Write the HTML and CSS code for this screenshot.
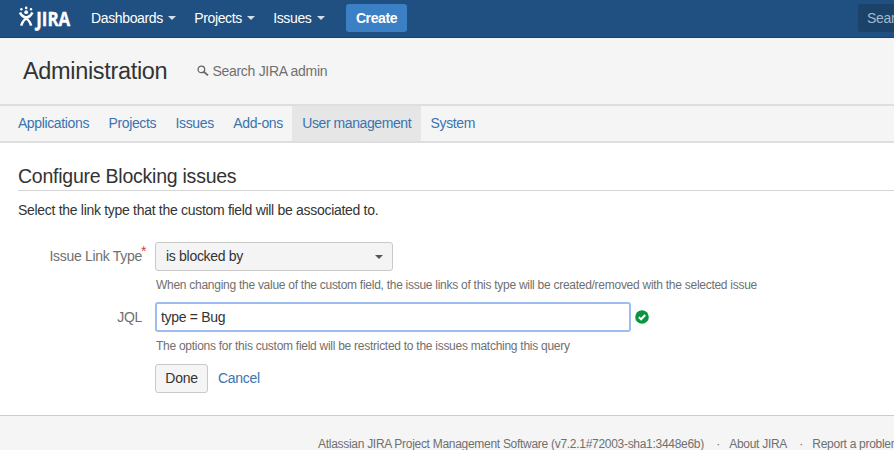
FILE: index.html
```html
<!DOCTYPE html>
<html lang="en">
<head>
<meta charset="utf-8">
<title>Configure Blocking issues - JIRA</title>
<link rel="stylesheet" href="styles.css">
</head>
<body>
<header class="topbar">
  <svg class="logo" width="54" height="24" viewBox="0 0 54 24">
    <g fill="#fff">
      <circle cx="3.4" cy="3.2" r="1.2"/><circle cx="8.2" cy="1.9" r="1.3"/><circle cx="13" cy="3.2" r="1.2"/>
      <circle cx="8.2" cy="6.2" r="1.9"/>
    </g>
    <path d="M2 6.4C3.6 10 6 11.2 8.2 11.2S12.8 10 14.4 6.4M3.6 9C8 11.5 12 14.5 13.2 19.6M12.8 9C8.4 11.5 4.4 14.5 3.2 19.6" fill="none" stroke="#fff" stroke-width="2.5"/>
    <text class="wordmark" x="18.2" y="19.6" textLength="34" lengthAdjust="spacingAndGlyphs">JIRA</text>
  </svg>
  <nav class="menu">
    <a class="drop">Dashboards</a>
    <a class="drop">Projects</a>
    <a class="drop">Issues</a>
  </nav>
  <button class="create">Create</button>
  <div class="quick">Search</div>
</header>
<div class="admin">
  <h1>Administration</h1>
  <svg class="lens" width="12" height="12" viewBox="0 0 12 12" fill="none" stroke="#666"><circle cx="4.4" cy="4.4" r="3.3" stroke-width="1.3"/><path d="M6.9 6.9L11 10.4" stroke-width="1.9"/></svg>
  <span class="find">Search JIRA admin</span>
</div>
<nav class="tabs">
  <a>Applications</a><a>Projects</a><a>Issues</a><a>Add-ons</a><a class="active">User management</a><a>System</a>
</nav>
<main>
  <h2>Configure Blocking issues</h2>
  <p class="intro">Select the link type that the custom field will be associated to.</p>
  <form>
    <div class="row">
      <label>Issue Link Type<span class="req">*</span></label>
      <div class="field">
        <div class="select">is blocked by</div>
        <p class="hint">When changing the value of the custom field, the issue links of this type will be created/removed with the selected issue</p>
      </div>
    </div>
    <div class="row jql">
      <label>JQL</label>
      <div class="field">
        <div class="line">
          <input type="text" value="type = Bug">
          <svg width="14" height="14" viewBox="0 0 14 14"><circle cx="7" cy="7" r="6.8" fill="#0b9440"/><path d="M3.8 7.1L6.1 9.3L10.2 5" fill="none" stroke="#fff" stroke-width="2"/></svg>
        </div>
        <p class="hint">The options for this custom field will be restricted to the issues matching this query</p>
      </div>
    </div>
    <div class="actions"><button type="button" class="done">Done</button><a>Cancel</a></div>
  </form>
</main>
<footer><span>Atlassian JIRA Project Management Software (v7.2.1#72003-sha1:3448e6b)</span><i>·</i><span>About JIRA</span><i>·</i><span>Report a problem</span></footer>
</body>
</html>
```
FILE: styles.css
```css
* { box-sizing: border-box; }
body {
  margin: 0;
  height: 450px;
  overflow: hidden;
  background: #fff;
  color: #333;
  font: 14px/19px "Liberation Sans", Arial, sans-serif;
  letter-spacing: -0.3px;
}
h1, h2, p { margin: 0; font-weight: normal; }
a { color: #3b73af; }
button, input { font: inherit; letter-spacing: inherit; color: inherit; margin: 0; }

.topbar {
  display: flex;
  align-items: center;
  height: 38px;
  padding: 0 0 1px 18px;
  background: #205081;
  border-bottom: 1px solid #2e3d54;
  overflow: hidden;
}
.logo { flex: none; overflow: visible; }
.wordmark { font: bold 19px "Open Sans", sans-serif; letter-spacing: 0; fill: #fff; stroke: #fff; stroke-width: 0.4px; }
.menu { display: flex; gap: 18.3px; margin-left: 19px; letter-spacing: -0.36px; }
.drop { display: flex; align-items: center; color: #fff; }
.drop::after {
  content: "";
  margin-left: 5px;
  border: 4px solid transparent;
  border-top-color: #d5dfe9;
  border-bottom: 0;
}
.create {
  width: 61px;
  height: 28px;
  margin-left: 21.5px;
  padding: 0;
  border: 0;
  border-radius: 3px;
  background: #3b7fc4;
  color: #fff;
  font-weight: bold;
  letter-spacing: -0.4px;
}
.quick {
  flex: none;
  width: 160px;
  height: 28px;
  margin: 0 -124px 0 auto;
  padding: 5px 9px;
  border-radius: 3px;
  background: #1b4269;
  color: #a5b8cb;
}

.admin {
  display: flex;
  align-items: center;
  height: 66px;
  padding-left: 23px;
  background: #f5f5f5;
  color: #707070;
}
.admin h1 { width: 144px; color: #333; font-size: 23.5px; letter-spacing: -0.33px; line-height: 28px; }
.lens { margin: 0 3.5px 0 30px; }

.tabs {
  display: flex;
  height: 39px;
  padding-left: 8px;
  border-top: 2px solid #dedede;
  border-bottom: 2px solid #dedede;
  background: #f5f5f5;
  letter-spacing: -0.36px;
}
.tabs a { padding: 8px 9.5px 8px 9.9px; }
.tabs .active { background: #e6e6e6; letter-spacing: -0.42px; }

main { height: 272px; padding: 20px 0 0 18px; }
h2 {
  height: 28px;
  border-bottom: 1px solid #d6d6d6;
  font-size: 19.5px;
  letter-spacing: -0.24px;
  line-height: 26px;
}
.intro { margin-top: 10px; }
form { margin-top: 22px; }
.row { display: flex; height: 61px; }
label { width: 124px; padding-top: 5px; text-align: right; color: #707070; white-space: nowrap; }
.req { position: absolute; margin-top: -5px; margin-left: -1px; color: #d04437; }
.field { margin-left: 13px; }
.select {
  display: flex;
  align-items: center;
  justify-content: space-between;
  width: 238px;
  height: 29px;
  padding: 0 9px 0 10px;
  border: 1px solid #c9c9c9;
  border-radius: 3px;
  background: #f4f4f4;
}
.select::after {
  content: "";
  border: 4px solid transparent;
  border-top-color: #555;
  border-bottom: 0;
}
.hint { margin-top: 5px; padding-left: 1px; color: #707070; font-size: 12px; letter-spacing: -0.27px; }
.jql .field { margin-top: -1px; }
.line { display: flex; align-items: center; gap: 4px; }
input {
  width: 476px;
  height: 30px;
  padding: 0 4px;
  border: 2px solid #9dbdf0;
  border-radius: 3px;
  outline: 0;
}
.actions { display: flex; align-items: center; gap: 10px; margin-left: 137px; }
.done {
  width: 53px;
  height: 29px;
  padding: 0;
  border: 1px solid #c9c9c9;
  border-radius: 3px;
  background: #f5f5f5;
}

footer {
  display: flex;
  height: 35px;
  padding: 19px 0 0 318px;
  border-top: 1px solid #ccc;
  background: #f5f5f5;
  color: #707070;
  font-size: 12px;
  letter-spacing: -0.29px;
  white-space: nowrap;
  overflow: hidden;
}
footer span { flex: none; }
footer i { flex: none; width: 25.3px; padding-left: 3px; text-align: center; font-style: normal; }
```
